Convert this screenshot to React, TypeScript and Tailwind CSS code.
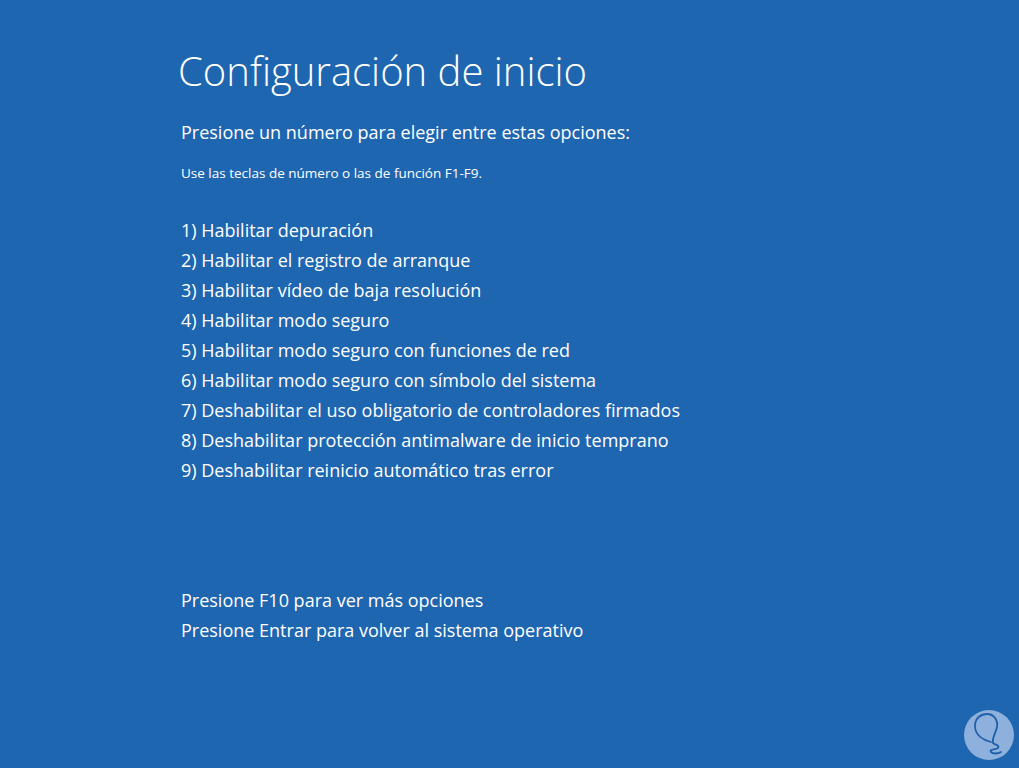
import React from 'react';

const options = [
  '1) Habilitar depuración',
  '2) Habilitar el registro de arranque',
  '3) Habilitar vídeo de baja resolución',
  '4) Habilitar modo seguro',
  '5) Habilitar modo seguro con funciones de red',
  '6) Habilitar modo seguro con símbolo del sistema',
  '7) Deshabilitar el uso obligatorio de controladores firmados',
  '8) Deshabilitar protección antimalware de inicio temprano',
  '9) Deshabilitar reinicio automático tras error',
];

const Watermark = () => (
  <svg viewBox="0 0 50 50" className="w-[50px] h-[50px]">
    <circle cx="25" cy="25" r="25" fill="#8db0dc" />
    <path
      d="M27 32 C19 30 11 25 11 16 C11 8 17 4 23 4 C30 4 34 10 33 17 C32 23 28 27 29 33 C31 35 36 35 34 38 C31 40 25 39 27 42 C29 44 34 44 37 42"
      fill="none"
      stroke="#1f5ea9"
      strokeWidth="1.8"
      strokeLinecap="round"
      strokeLinejoin="round"
    />
  </svg>
);

export default function App() {
  return (
    <div className="relative w-[1019px] h-[768px] bg-[#1f66b1] text-white overflow-hidden font-['Open_Sans',sans-serif]">
      <div className="flex flex-col pl-[181px] pt-[46px]">
        <h1 className="-ml-[3px] text-[40px] leading-[50px] font-light">Configuración de inicio</h1>
        <p className="mt-[21px] text-[18px] leading-[30px]">Presione un número para elegir entre estas opciones:</p>
        <p className="mt-[16px] text-[13.5px] leading-[20px]">Use las teclas de número o las de función F1-F9.</p>
        <ul className="mt-[32px] flex flex-col">
          {options.map(o => (
            <li key={o} className="text-[18px] leading-[30px]">
              {o}
            </li>
          ))}
        </ul>
        <div className="mt-[100px] flex flex-col">
          <p className="text-[18px] leading-[30px]">Presione F10 para ver más opciones</p>
          <p className="text-[18px] leading-[30px]">Presione Entrar para volver al sistema operativo</p>
        </div>
      </div>
      <div className="absolute left-[964px] top-[710px]">
        <Watermark />
      </div>
    </div>
  );
}
